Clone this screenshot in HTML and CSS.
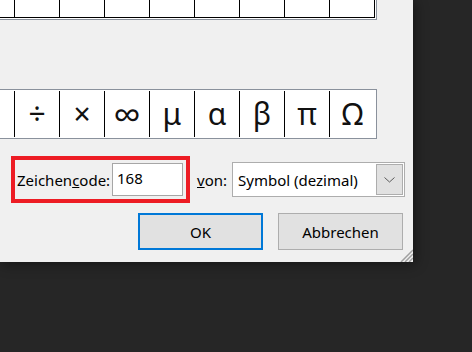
FILE: index.html
```html
<!DOCTYPE html>
<html>
<head>
<meta charset="utf-8">
<link rel="stylesheet" href="styles.css">
</head>
<body>
<div class="dialog">
  <div class="grid top">
    <div class="cell first"></div>
    <div class="cell"></div><div class="cell"></div><div class="cell"></div><div class="cell"></div>
    <div class="cell"></div><div class="cell"></div><div class="cell"></div><div class="cell"></div>
  </div>
  <div class="grid recent">
    <div class="cell first"></div>
    <div class="cell">÷</div>
    <div class="cell">×</div>
    <div class="cell inf">∞</div>
    <div class="cell">μ</div>
    <div class="cell">α</div>
    <div class="cell">β</div>
    <div class="cell">π</div>
    <div class="cell last">Ω</div>
  </div>
  <div class="form-row">
    <div class="highlight">
      <span class="label">Zeichen<u>c</u>ode:</span>
      <div class="input">168</div>
    </div>
    <span class="label von"><u>v</u>on:</span>
    <div class="combo">
      <span class="combo-text">Symbol (dezimal)</span>
      <div class="combo-btn">
        <svg width="11" height="6" viewBox="0 0 11 6"><path d="M0.5 0.5 L5.5 5 L10.5 0.5" fill="none" stroke="#5a5a5a" stroke-width="1"/></svg>
      </div>
    </div>
  </div>
  <div class="button-row">
    <div class="btn default">OK</div>
    <div class="btn">Abbrechen</div>
  </div>
  <svg class="grip" width="13" height="13" viewBox="0 0 13 13">
    <path d="M13 1 L1 13 M13 5 L5 13 M13 9 L9 13" stroke="#a0a0a0" stroke-width="1.5"/>
  </svg>
</div>
</body>
</html>
```
FILE: styles.css
```css
html, body {
  margin: 0;
  padding: 0;
}
body {
  width: 472px;
  height: 352px;
  background: #262626;
  overflow: hidden;
  font-family: "Noto Sans", "Open Sans", sans-serif;
  font-size: 15px;
  color: #000;
}
.dialog {
  position: relative;
  width: 413px;
  height: 262px;
  background: #f0f0f0;
  box-shadow: 2px 2px 12px rgba(0, 0, 0, 0.45);
  display: flex;
  flex-direction: column;
}
.grid {
  display: flex;
  width: 375px;
  background: #fff;
}
.grid.top {
  border-right: 1px solid #8a919c;
  border-bottom: 1px solid #8a919c;
  padding: 0 1px 1px 0;
}
.grid.top .cell {
  height: 18px;
  border-bottom: 1px solid #000;
}
.grid.recent {
  margin-top: 69px;
  border: 1px solid #8a919c;
  border-left: none;
  padding: 1px 1px 1px 0;
}
.cell {
  box-sizing: border-box;
  width: 45px;
  border-right: 1px solid #000;
  flex: none;
}
.cell.first {
  width: 15px;
}
.cell.last {
  border-right: none;
}
.grid.recent .cell {
  height: 46px;
  display: flex;
  align-items: center;
  justify-content: center;
  font-size: 30px;
  line-height: 46px;
  color: #111;
}
.grid.recent .cell.inf {
  font-size: 39px;
}
.form-row {
  margin-top: 17px;
  margin-left: 11px;
  display: flex;
  align-items: center;
}
.highlight {
  box-sizing: border-box;
  width: 179px;
  height: 47px;
  border: 4px solid #ed1c24;
  display: flex;
  align-items: center;
  padding-left: 2px;
}
.label {
  white-space: nowrap;
}
.input {
  box-sizing: border-box;
  margin-left: auto;
  margin-right: 3px;
  width: 71px;
  height: 33px;
  background: #fff;
  border: 1px solid #a6a6a6;
  padding-left: 4px;
  line-height: 29px;
}
.von {
  margin-left: 7px;
}
.combo {
  box-sizing: border-box;
  margin-left: 5px;
  width: 173px;
  height: 35px;
  background: #fff;
  border: 1px solid #adadad;
  display: flex;
  align-items: center;
  padding: 1px;
}
.combo-text {
  flex: 1;
  padding-left: 4px;
  white-space: nowrap;
}
.combo-btn {
  box-sizing: border-box;
  width: 27px;
  height: 31px;
  background: #e1e1e1;
  border: 1px solid #adadad;
  display: flex;
  align-items: center;
  justify-content: center;
}
.button-row {
  margin-top: 10px;
  margin-left: 138px;
  display: flex;
  gap: 15px;
}
.btn {
  box-sizing: border-box;
  width: 125px;
  height: 37px;
  background: #e1e1e1;
  border: 1px solid #adadad;
  display: flex;
  align-items: center;
  justify-content: center;
}
.btn.default {
  border: 2px solid #0078d7;
}
.grip {
  position: absolute;
  right: 0;
  bottom: 0;
}
```
